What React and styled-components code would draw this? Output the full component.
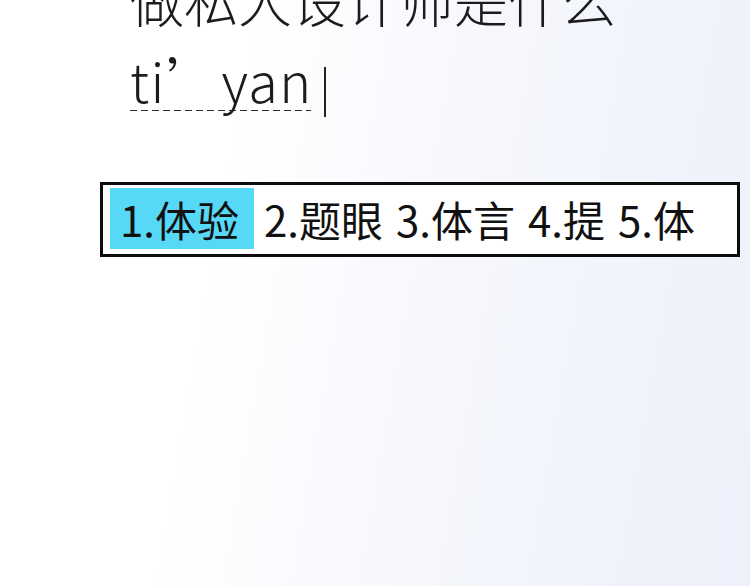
import React from "react";
import styled, { createGlobalStyle } from "styled-components";

const candidates = ["1.体验", "2.题眼", "3.体言", "4.提", "5.体"];

function App() {
  return (
    <>
      <GlobalStyle />
      <Page>
        <Composer>
          <Line>做私人设计师是什么</Line>
          <Line>
            <Pinyin>ti’yan</Pinyin>
            <Caret />
          </Line>
        </Composer>
        <CandidateBar>
          {candidates.map((c, i) => (
            <Candidate key={c} active={i === 0}>
              {c}
            </Candidate>
          ))}
        </CandidateBar>
      </Page>
    </>
  );
}

const GlobalStyle = createGlobalStyle`
  html, body {
    margin: 0;
    padding: 0;
  }
  body {
    font-family: "Noto Sans CJK SC", "Noto Sans", sans-serif;
    color: #1c1c1e;
    overflow: hidden;
  }
`;

const Page = styled.div`
  width: 750px;
  height: 586px;
  overflow: hidden;
  background: linear-gradient(100deg, #ffffff 30%, #f6f8fd 58%, #eef0fb 100%);
  display: flex;
  flex-direction: column;
`;

const Composer = styled.div`
  margin-top: -40px;
  padding-left: 130px;
`;

const Line = styled.div`
  font-size: 54px;
  font-weight: 300;
  line-height: 80px;
  height: 80px;
  white-space: nowrap;
`;

const Pinyin = styled.span`
  letter-spacing: 1.5px;
  background-image: repeating-linear-gradient(
    to right,
    #2a2a2a 0 7px,
    transparent 7px 11px
  );
  background-size: calc(100% - 2px) 1px;
  background-position: left 0 bottom 8px;
  background-repeat: no-repeat;
`;

const Caret = styled.span`
  display: inline-block;
  width: 2px;
  height: 50px;
  margin-left: 11px;
  background: #222;
  vertical-align: -14px;
`;

const CandidateBar = styled.div`
  margin-top: 62px;
  margin-left: 100px;
  width: 640px;
  height: 75px;
  box-sizing: border-box;
  border: 3px solid #0d0d0d;
  background: #ffffff;
  padding: 3px 6px 5px 7px;
  display: flex;
  align-items: stretch;
`;

const Candidate = styled.div`
  font-size: 42px;
  line-height: 61px;
  padding: 0 ${(p) => (p.active ? "15px" : "3px")} 0 10px;
  white-space: nowrap;
  background: ${(p) => (p.active ? "#57d8f6" : "transparent")};
  color: #111;
`;

export default App;
